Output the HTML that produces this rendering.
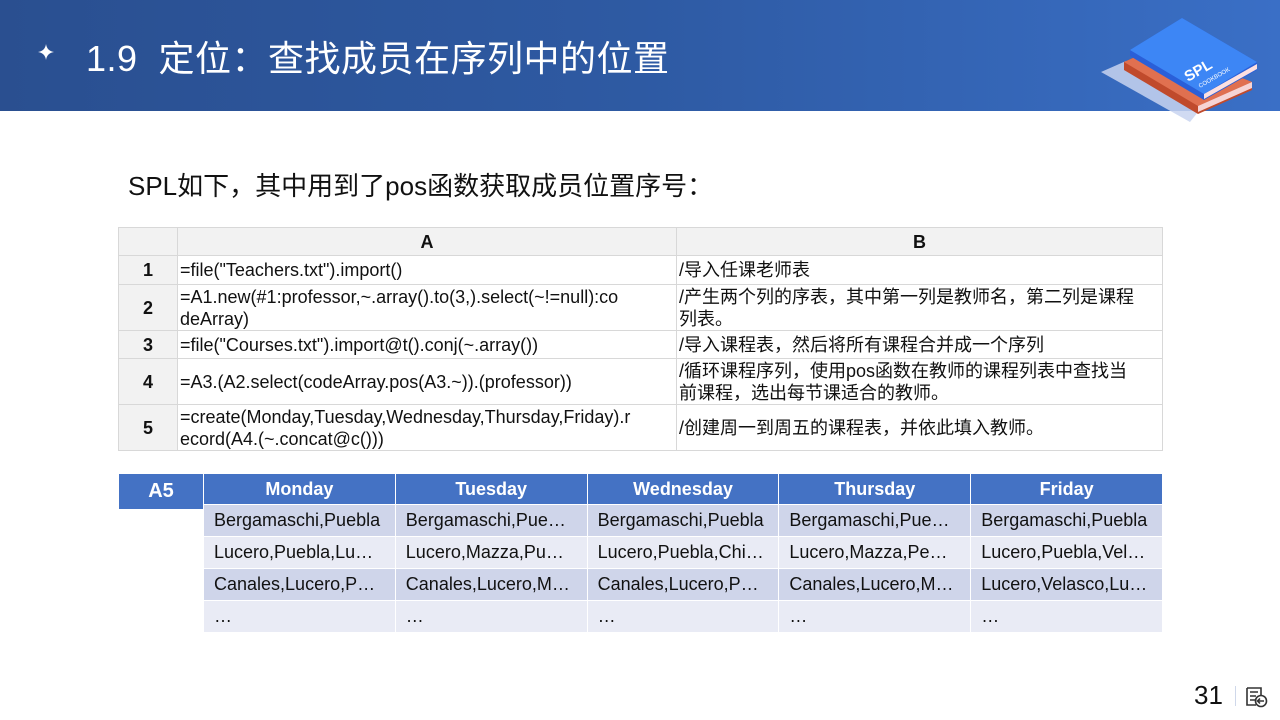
<!DOCTYPE html>
<html><head><meta charset="utf-8"><style>
*{margin:0;padding:0;box-sizing:border-box}
body{width:1280px;height:720px;background:#fff;position:relative;overflow:hidden;font-family:"Liberation Sans","Noto Sans CJK SC",sans-serif}
.hdr{position:absolute;left:0;top:0;width:1280px;height:111px;background:linear-gradient(90deg,#2a4f90 0%,#2e5aa3 50%,#3a6fc6 100%)}
.title{position:absolute;left:86px;top:30px;color:#fff;font-size:36px;font-family:"Liberation Sans","Noto Sans CJK SC",sans-serif;letter-spacing:0.5px}
.star{position:absolute;left:38px;top:44px}
.sub{position:absolute;left:128px;top:166px;font-size:26px;color:#111;font-family:"Liberation Sans","Noto Sans CJK SC",sans-serif}
table{border-collapse:collapse;position:absolute}
.t1{left:118px;top:227px;font-size:18px;font-family:"Liberation Sans","Noto Sans CJK SC",sans-serif;color:#111}
.t1 td{border:1px solid #d8d8d8;padding:0 2px;line-height:22px;vertical-align:middle;white-space:nowrap}
.t1 .n{background:#f2f2f2;text-align:center;font-weight:bold;width:59px}
.t1 .h td{background:#f2f2f2;text-align:center;font-weight:bold;height:28px}
.a5{position:absolute;left:119px;top:474px;width:84px;height:35px;background:#4472c4;color:#fff;font-weight:bold;font-size:20px;text-align:center;line-height:35px}
.t2{left:203px;top:473px;width:960px;table-layout:fixed;font-size:18px;color:#111;border-collapse:separate;border-spacing:1px}
.t2 th{background:#4472c4;color:#fff;font-size:18px;height:30px}
.t2 td{height:31px;padding-left:10px;white-space:nowrap;overflow:hidden}
.o td{background:#cfd5ea}.e td{background:#e9ebf5}
</style></head><body>
<div class="hdr"></div>
<svg class="star" width="16" height="16" viewBox="0 0 16 16"><path d="M8 0 Q9 7 16 8 Q9 9 8 16 Q7 9 0 8 Q7 7 8 0Z" fill="#fff"/></svg>
<div class="title">1.9&nbsp; 定位：查找成员在序列中的位置</div>
<svg style="position:absolute;left:0;top:0" width="1280" height="130">
<polygon points="1101,72 1126,61 1198,112 1190,122" fill="#c8d4f0" opacity="0.85"/>
<polygon points="1124,62 1160,46 1252,82 1252,90 1198,114 1124,70" fill="#c04a2c"/>
<polygon points="1124,62 1160,46 1252,82 1198,106" fill="#e07050"/>
<polygon points="1198,106 1252,82 1252,88 1198,112" fill="#f6d4d4"/>
<polygon points="1130,50 1182,18 1257,62 1257,70 1204,100 1130,56" fill="#2a5fd8"/>
<polygon points="1130,50 1182,18 1257,62 1204,94" fill="#3d86f5"/>
<polygon points="1204,94 1257,64 1257,69 1204,99" fill="#fde0e0"/>
<text x="1188" y="82" fill="#fff" font-size="15" font-weight="bold" transform="rotate(-30 1188 82)" font-family="Liberation Sans">SPL</text>
<text x="1200" y="88" fill="#fff" font-size="6" transform="rotate(-30 1200 88)" font-family="Liberation Sans">COOKBOOK</text>
</svg>
<div class="sub">SPL如下，其中用到了pos函数获取成员位置序号：</div>
<table class="t1">
<tr class="h"><td class="n"></td><td style="width:499px">A</td><td style="width:486px">B</td></tr>
<tr style="height:29px"><td class="n">1</td><td>=file("Teachers.txt").import()</td><td>/导入任课老师表</td></tr>
<tr style="height:46px"><td class="n">2</td><td>=A1.new(#1:professor,~.array().to(3,).select(~!=null):co<br>deArray)</td><td>/产生两个列的序表，其中第一列是教师名，第二列是课程<br>列表。</td></tr>
<tr style="height:28px"><td class="n">3</td><td>=file("Courses.txt").import@t().conj(~.array())</td><td>/导入课程表，然后将所有课程合并成一个序列</td></tr>
<tr style="height:46px"><td class="n">4</td><td>=A3.(A2.select(codeArray.pos(A3.~)).(professor))</td><td>/循环课程序列，使用pos函数在教师的课程列表中查找当<br>前课程，选出每节课适合的教师。</td></tr>
<tr style="height:46px"><td class="n">5</td><td>=create(Monday,Tuesday,Wednesday,Thursday,Friday).r<br>ecord(A4.(~.concat@c()))</td><td>/创建周一到周五的课程表，并依此填入教师。</td></tr>
</table>
<div class="a5">A5</div>
<table class="t2">
<tr><th>Monday</th><th>Tuesday</th><th>Wednesday</th><th>Thursday</th><th>Friday</th></tr>
<tr class="o"><td>Bergamaschi,Puebla</td><td>Bergamaschi,Pue…</td><td>Bergamaschi,Puebla</td><td>Bergamaschi,Pue…</td><td>Bergamaschi,Puebla</td></tr>
<tr class="e"><td>Lucero,Puebla,Lu…</td><td>Lucero,Mazza,Pu…</td><td>Lucero,Puebla,Chi…</td><td>Lucero,Mazza,Pe…</td><td>Lucero,Puebla,Vel…</td></tr>
<tr class="o"><td>Canales,Lucero,P…</td><td>Canales,Lucero,M…</td><td>Canales,Lucero,P…</td><td>Canales,Lucero,M…</td><td>Lucero,Velasco,Lu…</td></tr>
<tr class="e"><td>…</td><td>…</td><td>…</td><td>…</td><td>…</td></tr>
</table>
<div style="position:absolute;left:1194px;top:680px;font-size:26px;color:#111">31</div>
<div style="position:absolute;left:1235px;top:686px;width:1px;height:20px;background:#cfd8ea"></div>
<svg style="position:absolute;left:1245px;top:686px" width="24" height="22" viewBox="0 0 24 22"><path d="M2 2h14v7M2 2v17h9M5 6h8M5 10h6M5 14h5" stroke="#333" stroke-width="1.6" fill="none"/><circle cx="16" cy="15" r="5.5" stroke="#333" stroke-width="1.6" fill="none"/><path d="M19 15h-6M15 12.5l-2.5 2.5 2.5 2.5" stroke="#333" stroke-width="1.5" fill="none"/></svg>
</body></html>
